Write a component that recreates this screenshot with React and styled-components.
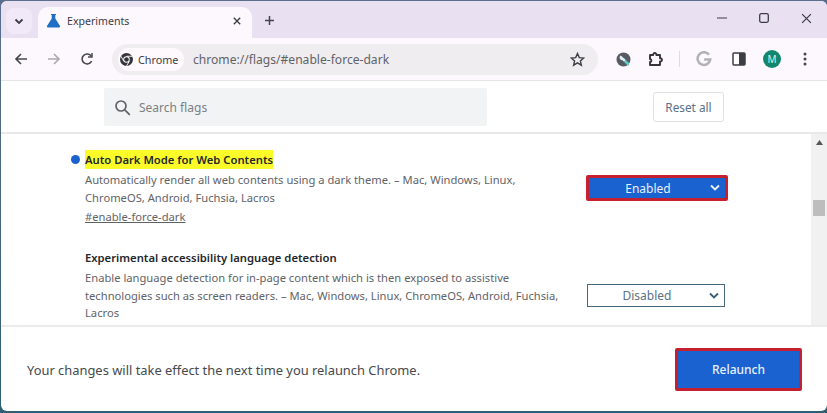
import React from 'react';
import styled, { createGlobalStyle } from 'styled-components';

const GlobalStyle = createGlobalStyle`
  html, body {
    margin: 0;
    padding: 0;
    background: #fff;
  }
  body {
    font-family: "Noto Sans", "Open Sans", sans-serif;
  }
`;

const Desktop = styled.div`
  width: 827px;
  height: 413px;
  overflow: hidden;
  box-sizing: border-box;
  padding: 1px 0 2px 1px;
  background: linear-gradient(180deg, #5a6f8c, #2f5f74);
`;

const Win = styled.div`
  height: 100%;
  overflow: hidden;
  display: flex;
  flex-direction: column;
  background: #fff;
  border-radius: 6px;
`;

const TabStrip = styled.div`
  height: 37px;
  flex: none;
  display: flex;
  align-items: flex-end;
  background: #e9e0f2;
  padding-left: 5px;
`;

const TabMenu = styled.div`
  width: 26px;
  height: 26px;
  margin-bottom: 4px;
  border-radius: 8px;
  background: #f1e9f7;
  display: flex;
  align-items: center;
  justify-content: center;
`;

const Tab = styled.div`
  width: 214px;
  height: 31px;
  margin-left: 6px;
  padding: 0 11px 4px 8px;
  box-sizing: border-box;
  display: flex;
  align-items: center;
  background: #fdf8fd;
  border-radius: 10px 10px 0 0;
`;

const TabTitle = styled.span`
  flex: 1;
  margin-left: 6px;
  font-size: 10.6px;
  color: #3c3c44;
`;

const NewTab = styled.div`
  width: 20px;
  margin: 0 0 8px 7px;
  height: 20px;
  display: flex;
  align-items: center;
  justify-content: center;
`;

const WindowControls = styled.div`
  margin-left: auto;
  height: 100%;
  padding-bottom: 3px;
  padding-right: 15px;
  box-sizing: border-box;
  display: flex;
  align-items: center;
  gap: 32px;
`;

const Toolbar = styled.div`
  height: 42px;
  flex: none;
  display: flex;
  align-items: center;
  background: #fdf8fd;
  padding-left: 12px;
  box-sizing: border-box;
`;

const NavIcon = styled.div`
  width: 16px;
  height: 16px;
  margin-right: ${p => p.$gap || 17}px;
  display: flex;
  align-items: center;
  justify-content: center;
  flex: none;
`;

const Omnibox = styled.div`
  width: 486px;
  height: 31px;
  margin-right: 17px;
  flex: none;
  display: flex;
  align-items: center;
  padding: 0 13px 0 6px;
  box-sizing: border-box;
  border-radius: 16px;
  background: #efedf0;
`;

const Chip = styled.div`
  width: 66px;
  height: 23px;
  padding-left: 2px;
  box-sizing: border-box;
  display: flex;
  align-items: center;
  gap: 5px;
  border-radius: 12px;
  background: #fdf9fd;
  font-size: 10.8px;
  color: #3c3c44;
`;

const Url = styled.span`
  flex: 1;
  margin-left: 9px;
  font-size: 12.1px;
  color: #5f6368;
`;

const Divider = styled.div`
  width: 1px;
  height: 16px;
  background: #dedbe2;
  margin: 0 16px 0 0;
  flex: none;
`;

const Avatar = styled.div`
  width: 18px;
  height: 18px;
  border-radius: 50%;
  background: #12876f;
  color: #d9efe9;
  font-size: 10px;
  display: flex;
  align-items: center;
  justify-content: center;
  margin-right: 16px;
  flex: none;
`;

const SearchBand = styled.div`
  height: 54px;
  flex: none;
  box-sizing: border-box;
  display: flex;
  align-items: center;
  padding: 0 103px 0 103px;
  justify-content: space-between;
  border-top: 1px solid #e6e6e8;
  border-bottom: 2px solid #e8e8ea;
`;

const SearchField = styled.div`
  width: 383px;
  height: 38px;
  padding: 1px 0 0 10px;
  box-sizing: border-box;
  display: flex;
  align-items: center;
  gap: 8px;
  background: #f1f3f4;
  border-radius: 2px;
  font-size: 12px;
  color: #7c8084;
`;

const ResetButton = styled.div`
  width: 71px;
  height: 30px;
  box-sizing: border-box;
  display: flex;
  align-items: center;
  justify-content: center;
  border: 1px solid #dfe1e5;
  border-radius: 3px;
  font-size: 11.8px;
  color: #5a7186;
`;

const Body = styled.div`
  flex: 1;
  min-height: 0;
  display: flex;
`;

const FlagList = styled.div`
  flex: 1;
  padding: 16px 0 0 84px;
  overflow: hidden;
`;

const Scrollbar = styled.div`
  width: 16px;
  flex: none;
  display: flex;
  flex-direction: column;
  align-items: center;
  background: #f1f1f2;
  padding-top: 6px;
  box-sizing: border-box;
`;

const ScrollThumb = styled.div`
  width: 12px;
  height: 16px;
  margin-top: 55px;
  background: #bdbdbe;
`;

const Flag = styled.div`
  display: flex;
  justify-content: space-between;
  align-items: flex-start;
  padding-right: ${p => p.$pad}px;
  margin-bottom: ${p => p.$after}px;
`;

const FlagText = styled.div`
  width: 480px;
`;

const TitleLine = styled.div`
  position: relative;
  font-size: 11.25px;
  line-height: 19px;
  margin-bottom: 2px;
  font-weight: 600;
  color: #24272b;
`;

const Highlight = styled.span`
  background: #fbfb2a;
  display: inline-block;
  height: 19px;
`;

const Dot = styled.span`
  position: absolute;
  left: -14px;
  top: 5px;
  width: 9px;
  height: 9px;
  border-radius: 50%;
  background: #1b62d0;
`;

const Desc = styled.div`
  font-size: 11.2px;
  line-height: 17.5px;
  color: #5f6368;
`;

const FlagLink = styled.div`
  font-size: 11.2px;
  line-height: 19px;
  margin-top: 1px;
  color: #5f6368;
  text-decoration: underline;
`;

const Select = styled.div`
  box-sizing: border-box;
  display: flex;
  align-items: center;
  position: relative;
  justify-content: center;
  font-size: 12px;
  ${p => p.$on ? `
    width: 142px;
    height: 26px;
    margin-top: 25px;
    padding-right: 18px;
    background: #1a62d0;
    border: 3px solid #c5202f;
    border-radius: 2px;
    color: #e8f0fc;
  ` : `
    width: 138px;
    height: 23px;
    margin-top: 36px;
    padding-right: 18px;
    background: #fff;
    border: 1px solid #47677e;
    color: #5a7186;
  `}
`;

const SelectArrow = styled.svg`
  position: absolute;
  right: 5px;
  top: 50%;
  margin-top: -4px;
`;

const Footer = styled.div`
  height: 86px;
  flex: none;
  box-sizing: border-box;
  display: flex;
  align-items: center;
  justify-content: space-between;
  padding: 1px 25px 0 26px;
  border-top: 2px solid #ebebed;
  font-size: 12.9px;
  color: #46494d;
`;

const Relaunch = styled.div`
  width: 127px;
  height: 43px;
  box-sizing: border-box;
  display: flex;
  align-items: center;
  justify-content: center;
  background: #1a62d0;
  border: 3px solid #c5202f;
  border-radius: 2px;
  font-size: 12px;
  font-weight: 500;
  color: #e8f0fc;
`;

const Chevron = ({ color = '#3c3c44' }) => (
  <svg width="10" height="10" viewBox="0 0 10 10" fill="none" stroke={color} strokeWidth="1.8">
    <path d="M1.5 3.5 5 7l3.5-3.5" />
  </svg>
);

const Flask = () => (
  <svg width="15" height="15" viewBox="0 0 15 15">
    <path d="M5 1h5v1H9.3v3.6L14 13c.3.7-.1 1.4-.9 1.4H1.9c-.8 0-1.2-.7-.9-1.4l4.7-7.4V2H5z" fill="#1f6fc4" />
  </svg>
);

const Cross = ({ size = 10, width = 1.5, color = '#3c3c44' }) => (
  <svg width={size} height={size} viewBox="0 0 10 10" stroke={color} strokeWidth={width}>
    <path d="M1 1l8 8M9 1l-8 8" />
  </svg>
);

const Plus = () => (
  <svg width="11" height="11" viewBox="0 0 11 11" stroke="#45454d" strokeWidth="1.5">
    <path d="M5.5 1v9M1 5.5h9" />
  </svg>
);

const Arrow = ({ dir, color }) => (
  <svg width="14" height="14" viewBox="0 0 14 14" fill="none" stroke={color} strokeWidth="1.6">
    {dir === 'left'
      ? <path d="M13 7H2M7 2 2 7l5 5" />
      : <path d="M1 7h11M7 2l5 5-5 5" />}
  </svg>
);

const Reload = () => (
  <svg width="14" height="14" viewBox="0 0 14 14" fill="none" stroke="#47474f" strokeWidth="1.6">
    <path d="M11.6 9.2A5 5 0 1 1 11.3 4.2" />
    <path d="M12 1v4H8" strokeWidth="1.5" />
  </svg>
);

const ChromeLogo = () => (
  <svg width="13" height="13" viewBox="0 0 14 14">
    <circle cx="7" cy="7" r="7" fill="#34343a" />
    <circle cx="7" cy="7" r="3.5" fill="#fff" />
    <circle cx="7" cy="7" r="2.5" fill="#34343a" />
    <path d="M7 3.5h6.5M4 8.8 1 3.4M10 8.8 7 14" stroke="#fff" strokeWidth="1" />
  </svg>
);

const Star = () => (
  <svg width="15" height="15" viewBox="0 0 15 15" fill="none" stroke="#3f3f47" strokeWidth="1.4">
    <path d="M7.5 1.5 9.3 5.6l4.4.4-3.3 2.9 1 4.3-3.9-2.3-3.9 2.3 1-4.3L1.3 6l4.4-.4z" />
  </svg>
);

const WrenchBadge = () => (
  <svg width="15" height="15" viewBox="0 0 15 15">
    <circle cx="7.5" cy="7.5" r="7" fill="#565c64" />
    <path d="M7.5 7.5 12 12" stroke="#62c9c4" strokeWidth="2.6" strokeLinecap="round" />
    <path d="M6.5 6.5 8 8" stroke="#e4f1f2" strokeWidth="2.4" strokeLinecap="round" />
    <path d="M3.6 5.6a2.4 2.4 0 0 0 3.6 2.2l-.9-3-1.6-1.4a2.4 2.4 0 0 0-1.1 2.2z" fill="#e4f1f2" />
  </svg>
);

const Puzzle = () => (
  <svg width="16" height="16" viewBox="0 0 16 16" fill="none" stroke="#35353d" strokeWidth="1.9" strokeLinejoin="round">
    <path d="M2 4h3.2c-.3-2.6 3.5-2.6 3.2 0H12v3.2c2.6-.3 2.6 3.5 0 3.2V14H2v-3c1.8.3 1.8-3.2 0-2.9z" />
  </svg>
);

const GoogleG = () => (
  <svg width="16" height="16" viewBox="0 0 15 15" fill="none" stroke="#b0b2b6" strokeWidth="2.3">
    <path d="M12.2 3.4A6 6 0 1 0 13.4 8H7.6" />
  </svg>
);

const SidePanel = () => (
  <svg width="14" height="14" viewBox="0 0 14 14">
    <rect x="1" y="1" width="12" height="12" rx="1" fill="#fff" stroke="#3d3d45" strokeWidth="1.5" />
    <rect x="7" y="1" width="6" height="12" fill="#3d3d45" />
  </svg>
);

const Kebab = () => (
  <svg width="4" height="14" viewBox="0 0 4 14" fill="#45454d">
    <circle cx="2" cy="2" r="1.5" />
    <circle cx="2" cy="7" r="1.5" />
    <circle cx="2" cy="12" r="1.5" />
  </svg>
);

const Magnifier = () => (
  <svg width="17" height="17" viewBox="0 0 17 17" fill="none" stroke="#5f6368" strokeWidth="1.7">
    <circle cx="7" cy="7" r="5" />
    <path d="m10.8 10.8 5 5" />
  </svg>
);

const SelectBox = ({ on, children }) => (
  <Select $on={on}>
    {children}
    <SelectArrow width="10" height="8" viewBox="0 0 10 8" fill="none" stroke={on ? '#e8f0fc' : '#3f5f78'} strokeWidth="1.9">
      <path d="M1 1.5 5 5.5l4-4" />
    </SelectArrow>
  </Select>
);

export default function App() {
  return (
    <>
      <GlobalStyle />
      <Desktop>
        <Win>
          <TabStrip>
            <TabMenu><Chevron /></TabMenu>
            <Tab>
              <Flask />
              <TabTitle>Experiments</TabTitle>
              <Cross size={8} width={1.7} />
            </Tab>
            <NewTab><Plus /></NewTab>
            <WindowControls>
              <svg width="10" height="10" viewBox="0 0 10 10" stroke="#3c3c44" strokeWidth="1.2"><path d="M0 5h10" /></svg>
              <svg width="10" height="10" viewBox="0 0 10 10" fill="none" stroke="#3c3c44" strokeWidth="1.3"><rect x=".7" y=".7" width="8.6" height="8.6" rx="1.5" /></svg>
              <Cross size={11} width={1.1} />
            </WindowControls>
          </TabStrip>
          <Toolbar>
            <NavIcon><Arrow dir="left" color="#45454d" /></NavIcon>
            <NavIcon><Arrow dir="right" color="#a9a9ae" /></NavIcon>
            <NavIcon><Reload /></NavIcon>
            <Omnibox>
              <Chip><ChromeLogo />Chrome</Chip>
              <Url>chrome://flags/#enable-force-dark</Url>
              <Star />
            </Omnibox>
            <NavIcon><WrenchBadge /></NavIcon>
            <NavIcon $gap={15}><Puzzle /></NavIcon>
            <Divider />
            <NavIcon $gap={19}><GoogleG /></NavIcon>
            <NavIcon $gap={16}><SidePanel /></NavIcon>
            <Avatar>M</Avatar>
            <NavIcon $gap={0}><Kebab /></NavIcon>
          </Toolbar>
          <SearchBand>
            <SearchField>
              <Magnifier />
              Search flags
            </SearchField>
            <ResetButton>Reset all</ResetButton>
          </SearchBand>
          <Body>
            <FlagList>
              <Flag $pad={83} $after={22}>
                <FlagText>
                  <TitleLine>
                    <Dot />
                    <Highlight>Auto Dark Mode for Web Contents</Highlight>
                  </TitleLine>
                  <Desc>
                    Automatically render all web contents using a dark theme. – Mac, Windows, Linux,
                    <br />
                    ChromeOS, Android, Fuchsia, Lacros
                  </Desc>
                  <FlagLink>#enable-force-dark</FlagLink>
                </FlagText>
                <SelectBox on>Enabled</SelectBox>
              </Flag>
              <Flag $pad={86} $after={0}>
                <FlagText>
                  <TitleLine>Experimental accessibility language detection</TitleLine>
                  <Desc>
                    Enable language detection for in-page content which is then exposed to assistive
                    <br />
                    technologies such as screen readers. – Mac, Windows, Linux, ChromeOS, Android, Fuchsia,
                    <br />
                    Lacros
                  </Desc>
                </FlagText>
                <SelectBox>Disabled</SelectBox>
              </Flag>
            </FlagList>
            <Scrollbar>
              <svg width="7" height="5" viewBox="0 0 7 5" fill="#55555a"><path d="M3.5 0 7 5H0z" /></svg>
              <ScrollThumb />
            </Scrollbar>
          </Body>
          <Footer>
            <span>Your changes will take effect the next time you relaunch Chrome.</span>
            <Relaunch>Relaunch</Relaunch>
          </Footer>
        </Win>
      </Desktop>
    </>
  );
}
